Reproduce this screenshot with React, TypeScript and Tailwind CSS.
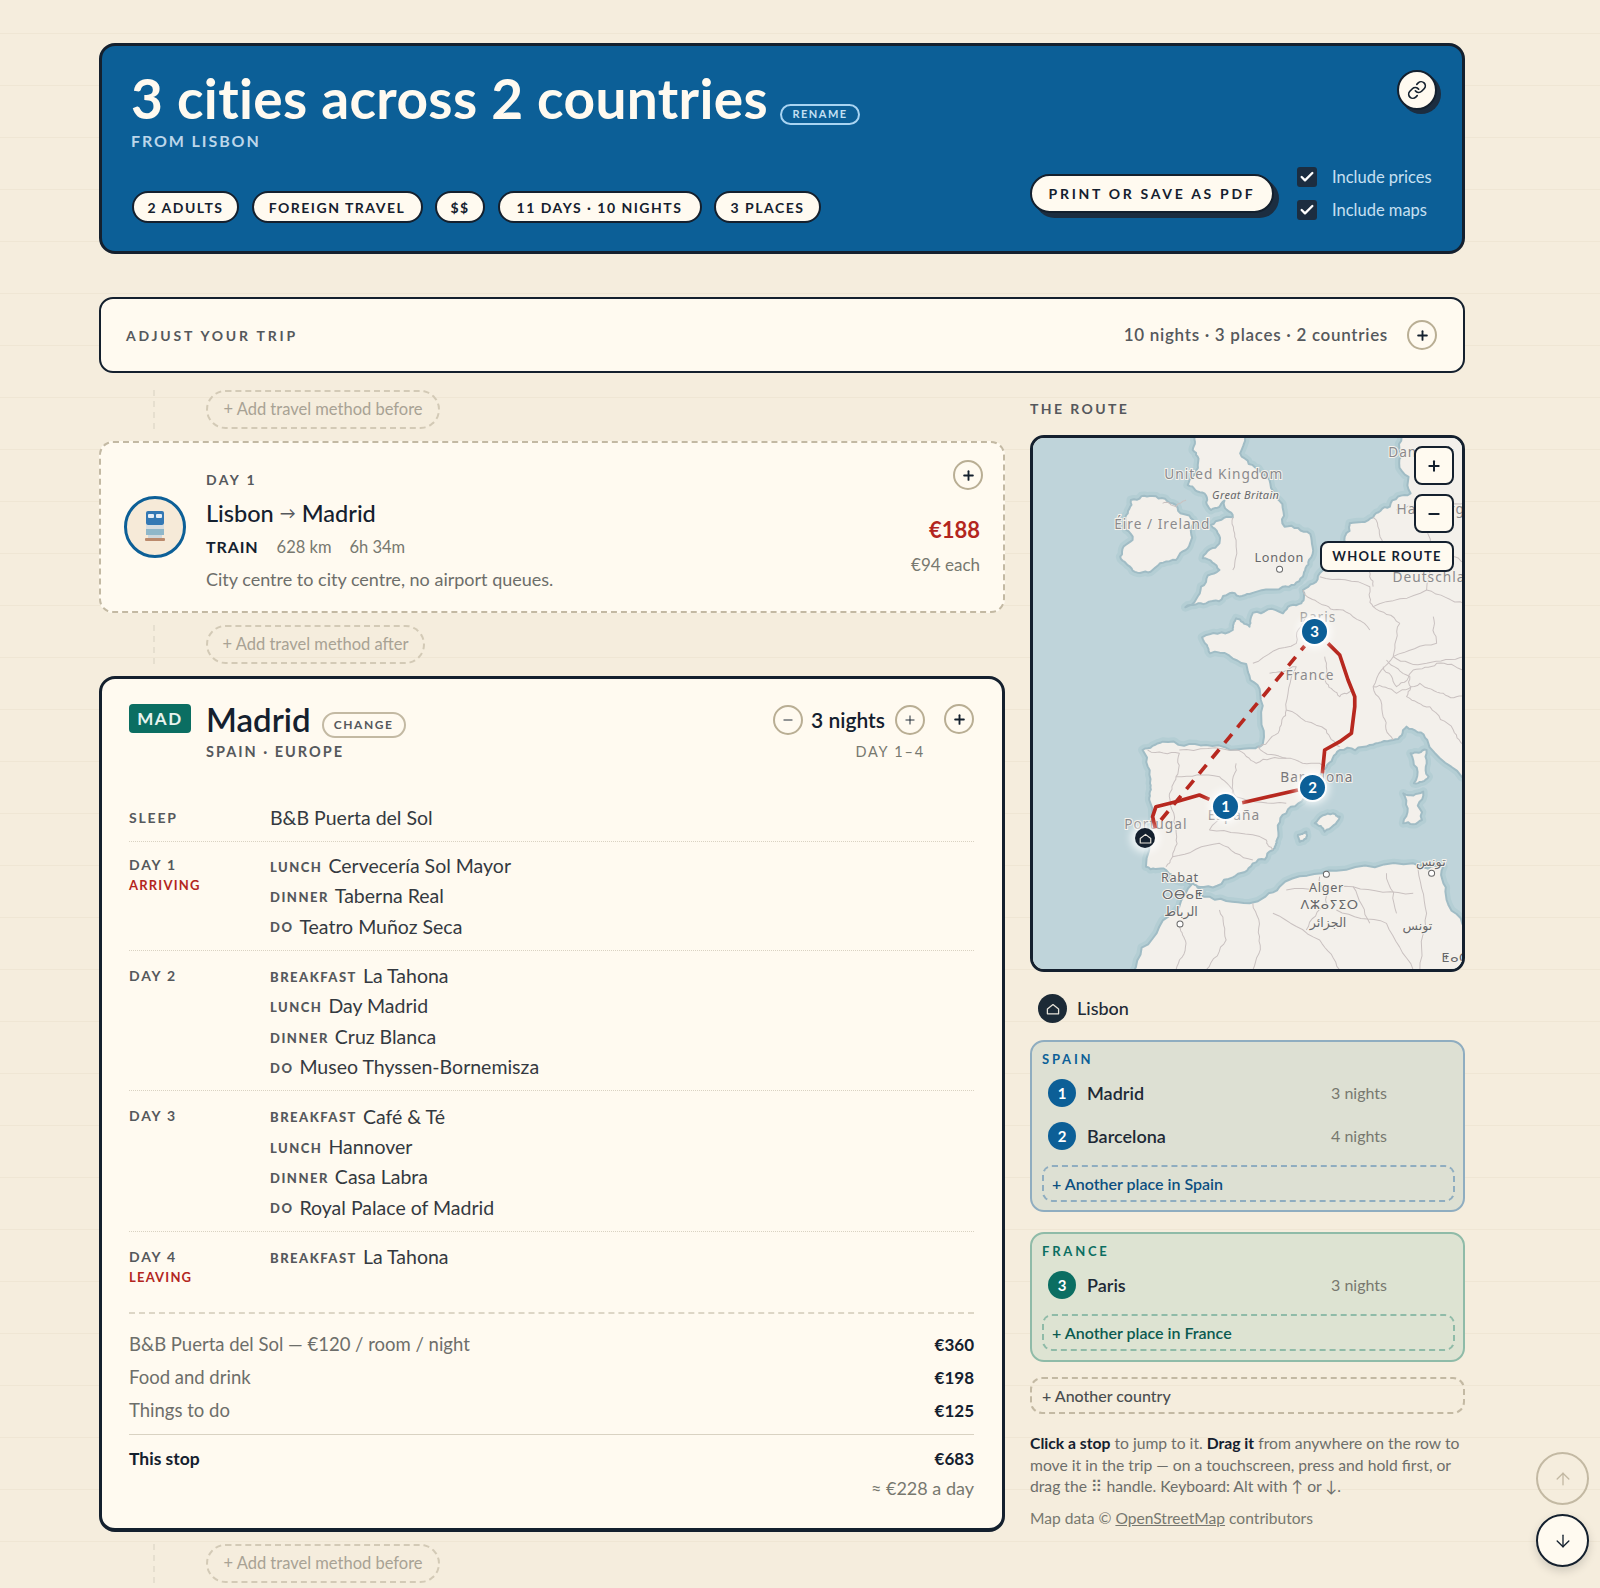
import { ReactNode } from "react";
import { ArrowDown, ArrowUp, Check, Link, Minus, Plus } from "lucide-react";

const INK = "text-[#14202e]";

function RoundBtn({ kind, thick }: { kind: "plus" | "minus"; thick?: boolean }) {
  const Icon = kind === "plus" ? Plus : Minus;
  return (
    <button className="flex h-[30px] w-[30px] shrink-0 items-center justify-center rounded-full border-2 border-[#b9ae94] bg-[#fffaf0] text-[#14202e]">
      <Icon size={thick ? 15 : 14} strokeWidth={thick ? 3 : 1.6} />
    </button>
  );
}

function Pill({ width, children }: { width: string; children: ReactNode }) {
  return (
    <span className={`flex h-[32px] ${width} items-center justify-center whitespace-nowrap rounded-full border-2 border-[#14202e] bg-[#fffaf0] text-[14px] font-bold tracking-[1.5px] text-[#14202e]`}>
      {children}
    </span>
  );
}

function Connector({ label, width }: { label: string; width: string }) {
  return (
    <div className="flex h-[39px] pl-[54px]">
      <div className="h-full border-l-2 border-dashed border-[#e6dfcf]" />
      <button
        className={`ml-[51px] h-full ${width} rounded-full border-2 border-dashed border-[#d3cab6] text-[16.5px] text-[#a8a294] whitespace-nowrap`}
      >
        {label}
      </button>
    </div>
  );
}

type Line = { tag?: string; text: string };

function DayRow({ day, note, lines, last, tight }: { day: string; note?: string; lines: Line[]; last?: boolean; tight?: boolean }) {
  return (
    <div className={`grid grid-cols-[141px_1fr] pb-[8px] ${tight ? "pt-[8px]" : "pt-[10px]"} ${last ? "" : "border-b border-dotted border-[#d9d2c2]"}`}>
      <div className="pt-[4px] text-[14px] leading-[21px] font-bold tracking-[1.8px]">
        <div className="text-[#55585c]">{day}</div>
        {note && <div className="text-[13px] tracking-[1.2px] text-[#b3261e]">{note}</div>}
      </div>
      <div>
        {lines.map((l) => (
          <div key={l.text} className="flex h-[30.4px] items-center gap-[6px] text-[19.5px] leading-none text-[#34393f]">
            {l.tag && <span className="mt-[3px] text-[13px] font-black tracking-[1.5px] text-[#55585c]">{l.tag}</span>}
            <span>{l.text}</span>
          </div>
        ))}
      </div>
    </div>
  );
}

function CostRow({ label, value }: { label: string; value: string }) {
  return (
    <div className="flex h-[33px] items-center justify-between text-[18.5px]">
      <span className="text-[#6d6e6a]">{label}</span>
      <span className="text-[17px] font-bold text-[#14202e]">{value}</span>
    </div>
  );
}

function Stop({ n, color, name, nights }: { n: number; color: string; name: string; nights: string }) {
  return (
    <div className="flex h-[28px] items-center pl-[6px]">
      <span className={`flex h-[28px] w-[28px] items-center justify-center rounded-full text-[15px] font-bold text-white ${color}`}>{n}</span>
      <span className="ml-[11px] text-[18px] font-semibold text-[#1e2a36]">{name}</span>
      <span className="ml-auto mr-[68px] text-[16px] text-[#77786f]">{nights}</span>
    </div>
  );
}

function HomeGlyph({ size }: { size: number }) {
  return (
    <svg width={size} height={size} viewBox="0 0 20 20" fill="none" stroke="#e8e4da" strokeWidth="1.6" strokeLinejoin="round">
      <path d="M3 10 10 4.5 17 10V16H3Z" />
    </svg>
  );
}

function MapPin({ n, pos }: { n: number; pos: string }) {
  return (
    <span className={`absolute flex h-[25px] w-[25px] items-center justify-center rounded-full bg-[#0c5f97] text-[15px] font-bold text-white ring-2 ring-white/90 shadow-[0_0_9px_4px_rgba(255,255,255,0.8)] ${pos}`}>
      {n}
    </span>
  );
}

/* midpoint displacement, so the coasts and borders don't look like straight cuts */
function rough(pts: number[][], amp: number, closed: boolean) {
  let seed = pts.length * 17 + Math.round(pts[0][0]);
  const rnd = () => {
    seed = (seed * 16807) % 2147483647;
    return (seed % 1000) / 1000 - 0.5;
  };
  const split = (a: number[], b: number[], spread: number, depth: number): number[][] => {
    if (depth === 0) return [a];
    const dx = b[0] - a[0];
    const dy = b[1] - a[1];
    const len = Math.hypot(dx, dy) || 1;
    const off = rnd() * Math.min(spread, len * 0.35);
    const mid = [(a[0] + b[0]) / 2 - (dy / len) * off, (a[1] + b[1]) / 2 + (dx / len) * off];
    return [...split(a, mid, spread / 1.7, depth - 1), ...split(mid, b, spread / 1.7, depth - 1)];
  };
  const out: number[][] = [];
  const n = closed ? pts.length : pts.length - 1;
  for (let i = 0; i < n; i++) out.push(...split(pts[i], pts[(i + 1) % pts.length], amp, 3));
  if (!closed) out.push(pts[pts.length - 1]);
  return out.map((p, i) => `${i ? "L" : "M"}${p[0].toFixed(1)} ${p[1].toFixed(1)}`).join("") + (closed ? "Z" : "");
}

const LAND = [
  // Great Britain
  [[530, 10], [520, 60], [535, 105], [505, 165], [555, 190], [575, 240], [615, 212], [640, 262], [575, 285], [600, 340], [550, 385], [600, 420], [545, 470], [498, 532], [560, 520], [630, 490], [690, 492], [790, 470], [850, 440], [868, 390], [872, 312], [795, 290], [772, 205], [722, 125], [662, 70], [685, 10]],
  // Ireland
  [[335, 210], [400, 198], [470, 225], [522, 270], [512, 340], [470, 390], [400, 420], [340, 422], [303, 380], [340, 330], [318, 262]],
  // Europe
  [[1150, 10], [1138, 100], [1172, 190], [1110, 230], [1060, 262], [990, 280], [975, 320], [985, 395], [900, 430], [850, 480], [845, 520], [790, 550], [700, 548], [690, 590], [650, 565], [640, 600], [548, 622], [572, 670], [680, 702], [722, 790], [730, 940], [708, 955], [560, 945], [430, 935], [370, 960], [392, 1060], [390, 1110], [380, 1310], [440, 1320], [540, 1370], [640, 1342], [700, 1300], [760, 1260], [772, 1230], [800, 1150], [860, 1080], [920, 1012], [960, 960], [1050, 945], [1120, 930], [1160, 890], [1222, 930], [1345, 1050], [1345, 10]],
  // North Africa
  [[340, 1630], [420, 1490], [520, 1360], [552, 1400], [690, 1420], [780, 1370], [950, 1322], [1180, 1300], [1270, 1310], [1280, 1410], [1345, 1530], [1345, 1630]],
  // Corsica, Sardinia, Balearics
  [[1172, 970], [1220, 960], [1226, 1040], [1182, 1060]],
  [[1150, 1090], [1210, 1085], [1206, 1170], [1150, 1180]],
  [[885, 1180], [940, 1150], [960, 1160], [915, 1205]],
  [[835, 1215], [860, 1205], [860, 1225], [840, 1235]],
].map((p) => rough(p, 30, true));

const BORDERS = [
  [[385, 960], [480, 970], [470, 1040], [450, 1100], [470, 1200], [460, 1280], [440, 1310]],
  [[715, 950], [800, 985], [900, 1000], [920, 1010]],
  [[480, 960], [650, 960], [710, 1000], [800, 985]],
  [[470, 1040], [600, 1040], [650, 1100], [800, 1120]],
  [[570, 1200], [740, 1230], [760, 1260]],
  [[650, 1000], [640, 1080], [570, 1200]],
  [[460, 1280], [600, 1240], [700, 1290]],
  [[850, 480], [900, 520], [970, 540], [1050, 600]],
  [[700, 700], [830, 640], [860, 560]],
  [[915, 680], [920, 760], [960, 800], [1000, 780]],
  [[750, 730], [830, 710], [800, 840], [780, 900], [720, 950]],
  [[800, 840], [920, 900], [960, 950]],
  [[900, 440], [1050, 470], [1060, 530], [1140, 580]],
  [[1140, 580], [1120, 680], [1060, 770], [1090, 860], [1120, 930]],
  [[1060, 530], [1220, 480], [1335, 520]],
  [[1240, 560], [1250, 640], [1120, 680]],
  [[1120, 680], [1220, 700], [1335, 680]],
  [[1090, 710], [1130, 770], [1180, 720], [1250, 700], [1335, 720]],
  [[1060, 770], [1130, 790], [1200, 760], [1270, 790], [1335, 800]],
  [[1100, 690], [1170, 740], [1160, 800], [1230, 830]],
  [[1230, 830], [1300, 900], [1335, 960]],
  [[1130, 240], [1220, 230], [1335, 220]],
  [[1060, 262], [1090, 340], [1040, 410], [1060, 470]],
  [[1220, 230], [1230, 360], [1220, 480]],
  [[1240, 360], [1335, 400]],
  [[480, 1490], [500, 1540], [470, 1620]],
  [[700, 1420], [720, 1520], [700, 1620]],
  [[600, 1440], [620, 1530], [560, 1620]],
  [[760, 1450], [900, 1530], [960, 1620]],
  [[950, 1440], [1100, 1480], [1180, 1620]],
  [[1190, 1300], [1220, 1450], [1200, 1620]],
  [[800, 1380], [1000, 1370], [1180, 1390]],
  [[1000, 1370], [1050, 1480]],
  [[1100, 1330], [1130, 1450]],
  [[900, 1340], [920, 1420], [860, 1500]],
  [[430, 220], [470, 230], [500, 210]],
  [[640, 262], [650, 340], [640, 420]],
].map((p) => rough(p, 18, false));

function RouteMap() {
  const label = { fontFamily: "'Noto Sans','DejaVu Sans',sans-serif", paintOrder: "stroke" as const, stroke: "#f5f2ec", strokeWidth: 6 };
  return (
    <svg viewBox="42 24 1284 1593" className="absolute inset-0 block h-full w-full" preserveAspectRatio="none">
      <rect x="42" y="24" width="1284" height="1593" fill="#bfd4da" />
      <g fill="none" strokeLinejoin="round">
        {LAND.map((d) => <path key={d} d={d} stroke="#b4ced4" strokeWidth="26" />)}
        {LAND.map((d) => <path key={d} d={d} stroke="#a0bcc5" strokeWidth="6" fill="#f3f0eb" />)}
        {BORDERS.map((d) => <path key={d} d={d} stroke="#c9c1c0" strokeWidth="3" />)}
      </g>
      <g fill="#8b8a8c" fontSize="41" letterSpacing="3" style={label}>
        <text x="435" y="147">United Kingdom</text>
        <text x="285" y="297">Éire / Ireland</text>
        <text x="1105" y="80">Danmark</text>
        <text x="1130" y="252">Hamburg</text>
        <text x="1118" y="457">Deutschland</text>
        <text x="798" y="750">France</text>
        <text x="840" y="575" fill="#9a9a9a">Paris</text>
        <text x="782" y="1055" fill="#77767a">Barcelona</text>
        <text x="565" y="1170">España</text>
        <text x="315" y="1198">Portugal</text>
      </g>
      <g fill="#66676a" fontSize="38" letterSpacing="2" style={label}>
        <text x="578" y="207" fontStyle="italic" fontSize="33" letterSpacing="1">Great Britain</text>
        <text x="705" y="395">London</text>
        <text x="425" y="1355">Rabat</text>
        <text x="428" y="1407">ⵔⴱⴰⵟ</text>
        <text x="435" y="1458">الرباط</text>
        <text x="868" y="1387">Alger</text>
        <text x="843" y="1438">ⴷⵣⴰⵢⵉⵔ</text>
        <text x="870" y="1490">الجزائر</text>
        <text x="1188" y="1307">تونس</text>
        <text x="1148" y="1500">تونس</text>
        <text x="1265" y="1597">ⵟⴰⵛ</text>
      </g>
      <g fill="#fff" stroke="#666" strokeWidth="3">
        <circle cx="780" cy="418" r="9" />
        <circle cx="482" cy="1482" r="9" />
        <circle cx="920" cy="1333" r="9" />
        <circle cx="1235" cy="1330" r="9" />
      </g>
      <g fill="none" stroke="#b7281f" strokeWidth="11" strokeLinejoin="round">
        <polyline points="925,640 960,675 985,750 1005,800 1005,830 995,910 960,935 915,960 908,1030" />
        <polyline points="835,1080 668,1118" />
        <polyline points="570,1108 540,1095 470,1115 410,1130 400,1160 408,1195" />
        <line x1="425" y1="1170" x2="855" y2="648" strokeDasharray="34 26" />
      </g>
    </svg>
  );
}

export default function App() {
  return (
    <div className="relative h-[1588px] overflow-hidden bg-[#f5eddd] bg-[linear-gradient(#efe6d4_1px,transparent_1px)] bg-[size:100%_52px] bg-[position:0_33px] pt-[43px] pl-[99px] [font-family:Lato,'DejaVu_Sans',sans-serif]">
      <div className="w-[1366px]">
        {/* Header */}
        <header className="relative flex h-[211px] flex-col rounded-[16px] border-[3px] border-[#14202e] bg-[#0c5f97] pt-[25px] pr-[29px] pb-[28px] pl-[29px]">
          <div className="flex items-end">
            <h1 className="text-[55px] leading-none font-bold tracking-[0.35px] whitespace-nowrap text-[#fffaf0]">3 cities across 2 countries</h1>
            <button className="mb-[1px] ml-[12px] flex h-[21px] w-[80px] items-center justify-center rounded-full border-2 border-[#a9d4f2] text-[11px] font-bold tracking-[1.5px] text-[#c4e0f4]">RENAME</button>
          </div>
          <div className="mt-[5px] text-[16px] leading-[20px] font-bold tracking-[1.9px] text-[#bcd6ea]">FROM LISBON</div>
          <div className="mt-auto flex items-end justify-between">
            <div className="flex gap-[12.5px] pl-[1px]">
              <Pill width="w-[107px]">2 ADULTS</Pill>
              <Pill width="w-[171px]">FOREIGN TRAVEL</Pill>
              <Pill width="w-[50px]">$$</Pill>
              <Pill width="w-[204px]">11 DAYS · 10 NIGHTS</Pill>
              <Pill width="w-[107px]">3 PLACES</Pill>
            </div>
            <div className="mb-[3px] flex items-center gap-[23px]">
              <button className="flex h-[39px] w-[244px] items-center justify-center rounded-full border-2 border-[#14202e] bg-[#fffaf0] text-[14px] font-bold tracking-[2.7px] text-[#14202e] shadow-[5px_5px_0_#1c2d40]">
                PRINT OR SAVE AS PDF
              </button>
              <div className="flex w-[136px] flex-col gap-[13px]">
                {["Include prices", "Include maps"].map((t) => (
                  <label key={t} className="flex h-[20px] items-center gap-[15px] text-[16.5px] whitespace-nowrap text-[#c7e0f2]">
                    <span className="flex h-[20px] w-[20px] shrink-0 items-center justify-center rounded-[3px] bg-[#1c2d40] text-white">
                      <Check size={16} strokeWidth={3.5} />
                    </span>
                    {t}
                  </label>
                ))}
              </div>
            </div>
          </div>
          <button className="absolute top-[24px] right-[25px] flex h-[40px] w-[40px] items-center justify-center rounded-full border-2 border-[#14202e] bg-[#fffaf0] text-[#14202e] shadow-[4px_4px_0_#1c2d40]">
            <Link size={20} strokeWidth={2} />
          </button>
        </header>

        {/* Adjust bar */}
        <div className="mt-[43px] flex h-[76px] items-center rounded-[14px] border-2 border-[#14202e] bg-[#fffaf0] pr-[26px] pl-[25px]">
          <span className="text-[14px] font-bold tracking-[2.8px] text-[#55585c]">ADJUST YOUR TRIP</span>
          <span className="mr-[19px] ml-auto text-[17px] font-semibold tracking-[0.7px] text-[#55585c]">10 nights · 3 places · 2 countries</span>
          <RoundBtn kind="plus" thick />
        </div>

        <div className="mt-[17px] flex gap-[25px]">
          {/* Left column */}
          <div className="flex w-[906px] flex-col gap-[12px]">
            <Connector label="+ Add travel method before" width="w-[234px]" />

            <section className="flex h-[172px] items-start rounded-[14px] border-2 border-dashed border-[#c3b9a3] bg-[#fffaf0] pt-[27px] pr-[23px] pl-[23px]">
              <div className="mt-[26px] flex h-[62px] w-[62px] shrink-0 items-center justify-center rounded-full border-[3px] border-[#0c5f97] bg-[#f6ead8]">
                <svg width="20" height="32" viewBox="0 0 20 32">
                  <rect x="1" y="0" width="18" height="14" rx="2" fill="#3378b4" />
                  <rect x="3" y="3" width="6" height="4" rx="1" fill="#e6eef6" />
                  <rect x="11" y="3" width="6" height="4" rx="1" fill="#e6eef6" />
                  <rect x="1" y="14" width="18" height="4" fill="#d7dde0" />
                  <rect x="1" y="18" width="18" height="6" fill="#8fb7c9" />
                  <rect x="3" y="24" width="14" height="3" fill="#cfd8dc" />
                  <rect x="0" y="27" width="20" height="3" rx="1" fill="#bb8a6c" />
                </svg>
              </div>
              <div className="ml-[20px]">
                <div className="text-[14px] leading-[20px] font-bold tracking-[2.4px] text-[#55585c]">DAY 1</div>
                <div className={`mt-[8px] flex items-center text-[23.5px] leading-[30px] font-medium ${INK}`}>
                  Lisbon<span className="mx-[6px] text-[16px] text-[#55585c]">→</span>Madrid
                </div>
                <div className="mt-[8px] flex items-baseline text-[16.5px] leading-[22px] text-[#77786f]">
                  <span className="text-[16px] font-bold tracking-[0.9px] text-[#14202e]">TRAIN</span>
                  <span className="ml-[18px]">628 km</span>
                  <span className="ml-[18px]">6h 34m</span>
                </div>
                <div className="mt-[9px] text-[18px] leading-[24px] text-[#6d6e6a]">City centre to city centre, no airport queues.</div>
              </div>
              <div className="ml-auto -mr-[3px] -mt-[10px] flex flex-col items-end">
                <RoundBtn kind="plus" thick />
                <div className="mt-[25px] mr-[3px] text-[22px] leading-[30px] font-bold text-[#b3261e]">€188</div>
                <div className="mt-[10px] mr-[3px] text-[17px] leading-[20px] text-[#77786f]">€94 each</div>
              </div>
            </section>

            <Connector label="+ Add travel method after" width="w-[219px]" />

            <section className="rounded-[16px] border-[3px] border-b-4 border-[#14202e] bg-[#fffaf0] pt-[25px] pr-[28px] pb-[28px] pl-[27px]">
              <div className="flex justify-between">
                <div className="flex">
                  <span className="flex h-[29px] w-[62px] items-center justify-center rounded-[4px] bg-[#0b6e62] text-[17px] font-bold tracking-[1.6px] text-[#e8f4ef]">MAD</span>
                  <div className="ml-[15px] -mt-[5px]">
                    <div className="flex items-center">
                      <h2 className={`text-[33px] leading-[40px] font-semibold ${INK}`}>Madrid</h2>
                      <button className="mt-[12px] ml-[11px] flex h-[26px] w-[84px] items-center justify-center rounded-full border-2 border-[#c3b9a3] text-[12px] font-bold tracking-[1.6px] text-[#55585c]">CHANGE</button>
                    </div>
                    <div className="mt-[3px] text-[14.5px] leading-[20px] font-bold tracking-[2px] text-[#55585c]">SPAIN · EUROPE</div>
                  </div>
                </div>
                <div className="flex items-start gap-[19px]">
                  <div>
                    <div className="flex items-center">
                      <RoundBtn kind="minus" />
                      <span className={`mx-[8px] w-[76px] text-[21px] font-semibold whitespace-nowrap ${INK}`}>3 nights</span>
                      <RoundBtn kind="plus" />
                    </div>
                    <div className="mt-[6px] text-right text-[14.5px] leading-[20px] tracking-[1.8px] text-[#77786f]">DAY 1–4</div>
                  </div>
                  <RoundBtn kind="plus" thick />
                </div>
              </div>

              <div className="mt-[31px]">
                <DayRow day="SLEEP" lines={[{ text: "B&B Puerta del Sol" }]} />
                <DayRow
                  tight
                  day="DAY 1"
                  note="ARRIVING"
                  lines={[
                    { tag: "LUNCH", text: "Cervecería Sol Mayor" },
                    { tag: "DINNER", text: "Taberna Real" },
                    { tag: "DO", text: "Teatro Muñoz Seca" },
                  ]}
                />
                <DayRow
                  day="DAY 2"
                  lines={[
                    { tag: "BREAKFAST", text: "La Tahona" },
                    { tag: "LUNCH", text: "Day Madrid" },
                    { tag: "DINNER", text: "Cruz Blanca" },
                    { tag: "DO", text: "Museo Thyssen-Bornemisza" },
                  ]}
                />
                <DayRow
                  day="DAY 3"
                  lines={[
                    { tag: "BREAKFAST", text: "Café & Té" },
                    { tag: "LUNCH", text: "Hannover" },
                    { tag: "DINNER", text: "Casa Labra" },
                    { tag: "DO", text: "Royal Palace of Madrid" },
                  ]}
                />
                <DayRow day="DAY 4" note="LEAVING" lines={[{ tag: "BREAKFAST", text: "La Tahona" }]} last />
              </div>

              <div className="mt-[16px] border-t-2 border-dashed border-[#ddd6c6] pt-[15px]">
                <CostRow label="B&B Puerta del Sol — €120 / room / night" value="€360" />
                <CostRow label="Food and drink" value="€198" />
                <CostRow label="Things to do" value="€125" />
                <div className="mt-[6px] border-t border-[#d9d2c2] pt-[9px]">
                  <div className="flex h-[30px] items-center justify-between text-[17px] font-bold text-[#14202e]">
                    <span className="text-[17.5px]">This stop</span>
                    <span>€683</span>
                  </div>
                  <div className="mt-[2px] text-right text-[18px] leading-[24px] text-[#77786f]">≈ €228 a day</div>
                </div>
              </div>
            </section>

            <Connector label="+ Add travel method before" width="w-[234px]" />
          </div>

          {/* Right column */}
          <aside className="w-[435px] pt-[9px]">
            <div className="text-[14px] leading-[20px] font-bold tracking-[2.4px] text-[#55585c]">THE ROUTE</div>
            <div className="relative mt-[16px] h-[537px] overflow-hidden rounded-[14px] border-[3px] border-[#14202e]">
              <RouteMap />
              <MapPin n={3} pos="left-[269px] top-[181px]" />
              <MapPin n={2} pos="left-[267px] top-[337px]" />
              <MapPin n={1} pos="left-[180px] top-[356px]" />
              <span className="absolute top-[390px] left-[102px] flex h-[20px] w-[20px] items-center justify-center rounded-full bg-[#14202e] shadow-[0_0_8px_4px_rgba(255,255,255,0.85)]">
                <HomeGlyph size={15} />
              </span>
              <div className="absolute top-[8px] right-[8px] flex w-[134px] flex-col items-end">
                <button className="flex h-[39px] w-[40px] items-center justify-center rounded-[8px] border-2 border-[#14202e] bg-[#fffaf0] text-[#14202e]">
                  <Plus size={16} strokeWidth={3} />
                </button>
                <button className="mt-[9px] flex h-[39px] w-[40px] items-center justify-center rounded-[8px] border-2 border-[#14202e] bg-[#fffaf0] text-[#14202e]">
                  <Minus size={16} strokeWidth={3} />
                </button>
                <button className="mt-[8px] flex h-[31px] w-[134px] items-center justify-center rounded-[8px] border-2 border-[#14202e] bg-[#fffaf0] text-[13px] font-bold tracking-[1.3px] text-[#14202e]">
                  WHOLE ROUTE
                </button>
              </div>
            </div>

            <div className="mt-[22px] flex h-[29px] items-center pl-[8px]">
              <span className="flex h-[29px] w-[29px] items-center justify-center rounded-full bg-[#1c2a36]">
                <HomeGlyph size={16} />
              </span>
              <span className="ml-[10px] text-[18px] font-medium text-[#1e2a36]">Lisbon</span>
            </div>

            <div className="mt-[17px] h-[172px] rounded-[14px] border-2 border-[#8fadc0] bg-[#dde0d3] pt-[9px] pr-[8px] pl-[10px]">
              <div className="text-[13px] leading-[16px] font-bold tracking-[2.8px] text-[#0c5f97]">SPAIN</div>
              <div className="mt-[12px] flex flex-col gap-[15px]">
                <Stop n={1} color="bg-[#0c5f97]" name="Madrid" nights="3 nights" />
                <Stop n={2} color="bg-[#0c5f97]" name="Barcelona" nights="4 nights" />
              </div>
              <div className="mt-[15px] flex h-[37px] items-center rounded-[10px] border-2 border-dashed border-[#8fadc0] pl-[8px] text-[16px] font-semibold text-[#0c4f80]">
                + Another place in Spain
              </div>
            </div>

            <div className="mt-[20px] h-[130px] rounded-[14px] border-2 border-[#8fbba8] bg-[#dde3d2] pt-[9px] pr-[8px] pl-[10px]">
              <div className="text-[13px] leading-[16px] font-bold tracking-[2.8px] text-[#0b6e62]">FRANCE</div>
              <div className="mt-[12px]">
                <Stop n={3} color="bg-[#0b6e62]" name="Paris" nights="3 nights" />
              </div>
              <div className="mt-[15px] flex h-[37px] items-center rounded-[10px] border-2 border-dashed border-[#8fbba8] pl-[8px] text-[16px] font-semibold text-[#0b5a50]">
                + Another place in France
              </div>
            </div>

            <div className="mt-[15px] flex h-[37px] items-center rounded-[12px] border-2 border-dashed border-[#c3b9a3] pl-[10px] text-[16px] font-medium text-[#4a4d4f]">
              + Another country
            </div>

            <p className="mt-[19px] text-[15.7px] leading-[21.5px] text-[#6d6e6a]">
              <b className="font-bold text-[#14202e]">Click a stop</b> to jump to it. <b className="font-bold text-[#14202e]">Drag it</b> from anywhere on the row to move it in the trip — on a touchscreen, press and hold first, or drag the ⠿ handle. Keyboard: Alt with ↑ or ↓.
            </p>
            <p className="mt-[10px] text-[15.6px] leading-[20px] text-[#77786f]">
              Map data © <span className="underline">OpenStreetMap</span> contributors
            </p>
          </aside>
        </div>
      </div>

      <div className="absolute top-[1452px] right-[11px] flex flex-col gap-[9px]">
        <button className="flex h-[53px] w-[53px] items-center justify-center rounded-full border-2 border-[#c3b9a3] text-[#c3b9a3]">
          <ArrowUp size={20} strokeWidth={1.6} />
        </button>
        <button className="flex h-[53px] w-[53px] items-center justify-center rounded-full border-2 border-[#14202e] bg-[#fffaf0] text-[#14202e] shadow-[0_4px_10px_rgba(0,0,0,0.15)]">
          <ArrowDown size={20} strokeWidth={1.6} />
        </button>
      </div>
    </div>
  );
}
